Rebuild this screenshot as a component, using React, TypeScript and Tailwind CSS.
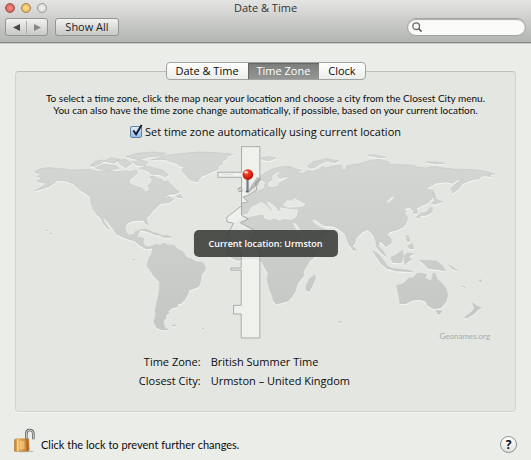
import { useState } from "react";

const LAND = {
  northAmerica:
    "M45 95L62 86L90 83L112 87L130 86L148 90L170 90L205 88L230 94L265 92L290 96L318 93L330 96L350 90L352 100L345 108L330 120L328 132L345 138L368 146L376 156L388 154L388 144L384 138L396 128L396 118L388 112L402 108L412 116L425 118L430 126L445 124L452 132L460 140L468 148L478 156L470 162L448 164L428 178L434 176L450 170L455 178L464 176L450 188L432 190L420 192L408 206L398 214L390 226L380 236L384 256L376 250L372 242L340 243L322 250L316 262L318 276L326 286L342 284L348 274L360 272L352 292L372 296L370 312L382 322L396 320L394 326L380 328L362 318L345 304L318 296L290 284L276 262L258 240L248 232L254 248L268 268L262 266L250 250L244 236L232 226L220 210L213 190L212 172L196 160L180 150L160 132L140 124L112 122L100 132L84 142L64 148L44 153L68 140L80 130L56 128L50 122L66 116L50 110L66 104L48 100Z",
  southAmerica:
    "M396 320L410 313L422 316L430 310L446 316L462 316L476 330L490 336L500 354L516 358L530 366L548 368L558 382L556 392L545 407L543 425L538 440L526 446L508 452L504 466L494 482L484 492L474 492L472 502L456 506L446 516L448 522L438 526L440 534L432 545L432 556L438 566L446 571L425 571L410 564L402 548L408 525L406 515L412 485L418 460L420 428L402 410L392 394L382 380L384 366L388 356L396 342L398 330Z",
  greenland:
    "M395 60L430 47L480 41L540 36L590 38L640 43L622 50L620 58L608 64L608 74L596 80L596 88L578 96L562 104L548 108L540 116L534 126L520 124L508 118L500 108L492 100L486 90L494 82L480 78L470 70L452 66L440 60Z",
  eurasiaAfrica:
    "M186 190L204 192L206 184L198 176L190 172L214 166L228 158L244 150L254 146L256 132L264 130L264 140L276 144L296 140L300 130L318 120L330 112L318 112L300 116L294 108L304 94L292 98L278 108L276 122L262 130L248 122L238 124L232 116L244 108L262 96L276 88L290 84L312 80L330 80L352 88L366 92L350 98L372 100L385 92L400 94L420 88L428 80L440 84L462 78L486 76L490 92L500 88L502 78L520 74L540 72L570 62L600 58L630 66L626 72L660 74L700 76L716 82L740 84L760 80L790 84L830 88L868 88L910 92L946 102L930 104L938 110L910 108L902 116L880 120L862 126L850 132L838 148L820 160L816 146L830 132L850 118L832 122L820 130L800 126L770 130L752 140L740 148L762 152L764 170L746 190L726 198L712 206L714 220L704 222L702 212L690 202L672 208L682 214L676 220L686 234L682 248L672 262L650 272L632 276L624 284L636 300L636 310L620 322L610 310L600 304L598 320L612 334L620 350L606 340L592 322L590 308L584 290L578 282L566 270L550 276L530 296L526 312L516 324L508 314L498 284L484 272L470 262L450 258L432 260L450 276L430 295L395 310L385 318L425 320L415 345L390 365L372 395L372 410L354 432L348 455L336 474L325 485L306 490L290 494L282 485L278 468L270 450L262 420L266 402L256 385L245 365L225 358L170 362L140 345L128 312L140 285L165 250L180 242L190 228L184 222L184 204Z",
};

const ISLANDS_WEST = [
  "M210 78L226 64L250 60L246 70L224 80Z",
  "M226 84L250 74L284 76L298 86L270 92L236 88Z",
  "M250 64L276 54L300 58L284 70Z",
  "M292 62L318 58L336 70L318 84L302 74Z",
  "M318 50L352 40L400 36L440 40L420 48L384 52L360 60L336 56Z",
  "M338 66L360 60L384 66L376 78L350 76Z",
  "M360 86L378 78L404 84L430 92L446 106L436 112L420 104L396 104L384 94Z",
  "M360 270L378 268L402 278L426 286L410 286L384 276Z",
  "M424 290L440 286L456 292L436 294Z",
  "M470 168L482 164L488 174L474 174Z",
  "M78 271L84 272L82 274Z",
  "M90 280L95 281L92 285Z",
  "M458 557L470 556L462 561Z",
  "M548 566L554 567L551 570Z",
  "M338 359L344 360L341 362Z",
];

const ISLANDS_EAST = [
  "M198 158L206 150L202 138L210 126L218 130L218 142L234 148L230 156L214 162Z",
  "M174 154L180 144L194 146L190 156Z",
  "M242 55L268 50L288 54L272 62L252 60Z",
  "M384 80L400 66L442 56L462 60L430 68L404 84L392 86Z",
  "M566 46L586 44L620 52L600 54Z",
  "M742 66L770 66L796 70L766 72Z",
  "M450 66L478 60L470 68Z",
  "M760 158L766 160L770 178L790 186L766 194L758 190L766 182Z",
  "M712 232L724 220L742 218L752 204L760 204L758 218L742 226L724 228L720 236Z",
  "M406 405L408 416L398 440L390 456L380 452L380 438L390 418Z",
  "M520 320L528 326L528 334L520 330Z",
  "M580 334L596 342L616 366L624 380L640 386L690 392L700 396L650 394L622 386L606 372L592 352Z",
  "M634 354L650 346L670 332L672 350L666 370L640 368Z",
  "M676 346L686 340L702 342L690 350L696 360L686 366L678 376L674 360Z",
  "M680 286L688 290L692 304L684 306Z",
  "M686 318L700 312L702 328L690 326Z",
  "M720 362L742 362L772 364L790 378L798 394L776 390L746 386L734 372Z",
  "M652 438L672 432L690 414L700 416L716 400L742 404L738 416L756 424L762 400L768 402L776 420L792 434L802 450L806 468L800 488L786 504L764 508L746 498L740 486L724 480L700 482L680 492L662 492L660 476Z",
  "M770 512L788 514L782 524L776 524Z",
  "M880 490L892 498L906 504L896 512L886 522L864 536L856 534L874 520L886 508Z",
  "M848 438L856 442L860 446Z",
  "M900 424L908 420L904 428Z",
  "M808 376L822 384L834 392L820 388Z",
  "M478 545L486 547L482 550Z",
];

const SEAS = [
  "M190 226L206 222L216 202L234 194L246 188L260 198L276 214L282 216L276 204L264 192L266 186L286 200L296 216L306 212L302 204L316 206L336 210L354 210L350 230L336 238L316 236L300 240L282 234L272 240L256 234L252 222L228 226L204 230Z",
  "M312 196L324 182L336 184L346 176L354 182L376 192L372 198L350 200L328 202Z",
  "M342 250L350 254L382 300L376 302L358 280Z",
  "M400 240L412 244L430 258L450 262L444 268L424 260L406 250Z",
  "M626 188L634 182L642 174L640 170L626 184Z",
];

function WorldMap() {
  return (
    <svg viewBox="48 432 1500 600" className="block w-full" role="img" aria-label="World time zone map">
      <defs>
        <linearGradient id="land" gradientUnits="userSpaceOnUse" x1="0" y1="30" x2="0" y2="560">
          <stop offset="0" stopColor="#d5d7d4" />
          <stop offset="1" stopColor="#c5c7c4" />
        </linearGradient>
        <linearGradient id="needle" x1="0" x2="1">
          <stop offset="0" stopColor="#55606c" />
          <stop offset="1" stopColor="#9ca4ad" />
        </linearGradient>
        <radialGradient id="pin" cx=".38" cy=".3" r=".7">
          <stop offset="0" stopColor="#ffb09a" />
          <stop offset=".3" stopColor="#f03a24" />
          <stop offset="1" stopColor="#b80f06" />
        </radialGradient>
      </defs>
      <g fill="url(#land)" stroke="#bdc0bc" strokeWidth="1.5" strokeLinejoin="round" className="drop-shadow-[0_3px_1px_#f8faf6]">
        <g transform="translate(60 420)">
          <path d={LAND.northAmerica} />
          <path d={LAND.southAmerica} />
          <path d={LAND.greenland} />
          {ISLANDS_WEST.map((d) => <path key={d} d={d} />)}
        </g>
        <g transform="translate(540 420)">
          <path d={LAND.eurasiaAfrica} />
          {ISLANDS_EAST.map((d) => <path key={d} d={d} />)}
        </g>
      </g>
      <g transform="translate(540 420)">
        <g fill="#e6e8e3" stroke="#f3f5f1" strokeWidth="2">
          {SEAS.map((d) => <path key={d} d={d} />)}
        </g>
        <path
          d="M186 20H241V118L228 130L232 148L214 162L190 172L206 186L186 190V198L142 232V246L162 250L148 276L160 320L185 340V385H154V391H185V497H162V523H185V595H241V340L215 300L228 274L182 248L206 238L186 226V112H115V97H186Z"
          fill="#f5f7f3"
          fillOpacity=".65"
          stroke="#a9aca9"
          strokeWidth="3"
        />
        <path d="M126 104H162" stroke="#dcdedb" strokeWidth="3" />
        <path d="M206 152L232 112L244 116L236 134L212 154Z" fill="#777a78" fillOpacity=".45" />
        <path d="M174 148L184 142M178 156L190 152" stroke="#999c99" strokeWidth="3" />
        <ellipse cx="204" cy="155" rx="6" ry="3" fill="#555b5e" />
        <rect x="201" y="112" width="7" height="43" fill="url(#needle)" />
        <circle cx="205" cy="104" r="16" fill="url(#pin)" />
        <ellipse cx="199" cy="97" rx="5" ry="4" fill="#ffe3da" fillOpacity=".8" />
      </g>
    </svg>
  );
}

function Padlock() {
  return (
    <svg viewBox="0 0 66 75" className="h-[25px] w-[22px]" aria-hidden="true">
      <defs>
        <linearGradient id="brass" x1="0" x2="1">
          <stop offset="0" stopColor="#b77429" />
          <stop offset=".25" stopColor="#f0bd6c" />
          <stop offset=".5" stopColor="#e0a04a" />
          <stop offset="1" stopColor="#b56d26" />
        </linearGradient>
      </defs>
      <ellipse cx="32" cy="70" rx="28" ry="3" fill="#b9bbb8" />
      <path d="M37 40V18Q37 6 47 6Q58 6 58 18V34" fill="none" stroke="#656765" strokeWidth="8" />
      <path d="M37 40V18Q37 6 47 6Q58 6 58 18V34" fill="none" stroke="#d5d7d5" strokeWidth="3" />
      <path d="M1 35L7 32H44L46 66L41 70H1Z" fill="url(#brass)" stroke="#a7702f" strokeWidth="1" />
      <path d="M11 34V69M17 42H32M17 48H32M17 54H32M17 60H32" stroke="#fadb9b" strokeWidth="3" />
      <path d="M40 34V69" stroke="#98571d" strokeWidth="2" />
    </svg>
  );
}

const TABS = ["Date & Time", "Time Zone", "Clock"];

export default function App() {
  const [tab, setTab] = useState("Time Zone");
  const [auto, setAuto] = useState(true);

  return (
    <div className="min-h-screen bg-[#ebede9] font-['Open_Sans','Noto_Sans',sans-serif] text-[11px] font-medium text-[#0c0c0c]">
      <header className="relative border-b border-[#858785] bg-linear-to-b from-[#e4e5e3] to-[#b3b5b3] px-[5px] pb-[6px] shadow-[0_1px_0_#c8cac7]">
        <div className="absolute top-[3px] left-[5px] flex gap-[6px]">
          <button aria-label="Close" className="size-[10px] rounded-full border border-[#97504d] bg-radial from-[#ff9a94] to-[#cf3c39]" />
          <button aria-label="Minimise" className="size-[10px] rounded-full border border-[#a08040] bg-radial from-[#ffe9a0] to-[#e5a33a]" />
          <button aria-label="Zoom" className="size-[10px] rounded-full border border-[#999b99] bg-radial from-[#f4f5f3] to-[#cfd1ce]" />
        </div>
        <h1 className="pb-[2px] text-center leading-4 font-medium text-[#333]">Date &amp; Time</h1>
        <div className="flex items-center gap-[7px]">
          <div className="flex h-[18px] w-[43px] items-center rounded-[3px] border border-[#939593] bg-linear-to-b from-[#f2f3f1] to-[#c7c9c6]">
            <button aria-label="Back" className="flex flex-1 justify-center border-r border-[#a9aba9] py-[3px]">
              <svg viewBox="0 0 8 8" className="size-[7px]"><path d="M8 0V8L0 4Z" fill="#484a48" /></svg>
            </button>
            <button aria-label="Forward" className="flex flex-1 justify-center py-[3px]">
              <svg viewBox="0 0 8 8" className="size-[7px]"><path d="M0 0V8L8 4Z" fill="#858785" /></svg>
            </button>
          </div>
          <button className="h-[18px] w-[64px] rounded-[3px] border border-[#939593] bg-linear-to-b from-[#f2f3f1] to-[#c7c9c6] leading-4 text-[#222]">
            Show All
          </button>
          <label className="ml-auto flex h-[18px] w-[119px] items-center gap-1 rounded-full border border-[#a2a4a2] bg-[#fbfcfa] pl-1 shadow-[inset_0_1px_1px_#aaa]">
            <svg viewBox="0 0 12 12" className="size-[10px] shrink-0" fill="none" stroke="#656765">
              <circle cx="5" cy="5" r="4" strokeWidth="1.6" />
              <path d="M8 8L11.5 11.5" strokeWidth="2.2" />
            </svg>
            <input type="search" aria-label="Search" className="min-w-0 flex-1 bg-transparent pr-2 outline-none" />
          </label>
        </div>
      </header>

      <main className="px-[15px] pt-[19px]">
        <div role="tablist" className="relative z-10 -mb-[9px] flex justify-center">
          <div className="flex h-[18px] w-[200px] overflow-hidden rounded-[4px] border border-[#a0a2a0] bg-linear-to-b from-white to-[#eceeea]">
            {TABS.map((name) => (
              <button
                key={name}
                role="tab"
                aria-selected={tab === name}
                onClick={() => setTab(name)}
                className={
                  tab === name
                    ? "flex-auto bg-linear-to-b from-[#7b7d7a] to-[#959794] leading-4 text-white shadow-[inset_1px_1px_1px_#626462]"
                    : "flex-auto leading-4"
                }
              >
                {name}
              </button>
            ))}
          </div>
        </div>

        <section className="rounded-[4px] border border-[#d0d3ce] border-t-[#bcbfbb] bg-[#e4e6e1] pt-[20px] pb-[22px] shadow-[0_1px_0_#f3f5f1]">
          <p className="text-center font-['Lato','Open_Sans',sans-serif] text-[10px] leading-3 font-normal">
            To select a time zone, click the map near your location and choose a city from the Closest City menu.
            <br />
            You can also have the time zone change automatically, if possible, based on your current location.
          </p>
          <label className="mt-[8px] flex items-center justify-center gap-[3px] leading-4">
            <span className="relative size-3">
              <input
                type="checkbox"
                checked={auto}
                onChange={(e) => setAuto(e.target.checked)}
                className="block size-3 appearance-none rounded-[2px] border border-[#6b7f9d] bg-linear-to-b from-[#dcebfb] to-[#8fbdec]"
              />
              {auto && (
                <svg viewBox="0 0 12 14" className="pointer-events-none absolute -top-[2px] left-px h-[13px] w-3" fill="none">
                  <path d="M2 7L5 11L11 1" stroke="#15182a" strokeWidth="2" />
                </svg>
              )}
            </span>
            Set time zone automatically using current location
          </label>
          <div className="relative mt-[4px]">
            <WorldMap />
            <div className="absolute top-[43%] left-1/2 -translate-x-1/2 rounded-[5px] bg-[#3d3f3c]/90 px-[15px] text-[9px] leading-[27px] font-semibold whitespace-nowrap text-white">
              Current location: Urmston
            </div>
            <span className="absolute right-[5%] bottom-[2px] font-['Lato','Open_Sans',sans-serif] text-[8px] leading-3 font-normal text-[#a9aba8]">Geonames.org</span>
          </div>
          <dl className="mt-[10px] grid grid-cols-[37%_1fr] gap-x-[10px] gap-y-[3px] leading-4">
            <dt className="text-right">Time Zone:</dt>
            <dd>British Summer Time</dd>
            <dt className="text-right">Closest City:</dt>
            <dd>Urmston – United Kingdom</dd>
          </dl>
        </section>
      </main>

      <footer className="flex items-end justify-between px-[14px] pt-[16px] pb-[6px]">
        <button className="flex items-end gap-[5px] text-left font-['Lato','Open_Sans',sans-serif] leading-4 font-normal">
          <Padlock />
          Click the lock to prevent further changes.
        </button>
        <button aria-label="Help" className="size-[17px] rounded-full border border-[#8d8f8d] bg-linear-to-b from-white to-[#e1e3e0] text-[12px] leading-[15px] font-bold">
          ?
        </button>
      </footer>
    </div>
  );
}
